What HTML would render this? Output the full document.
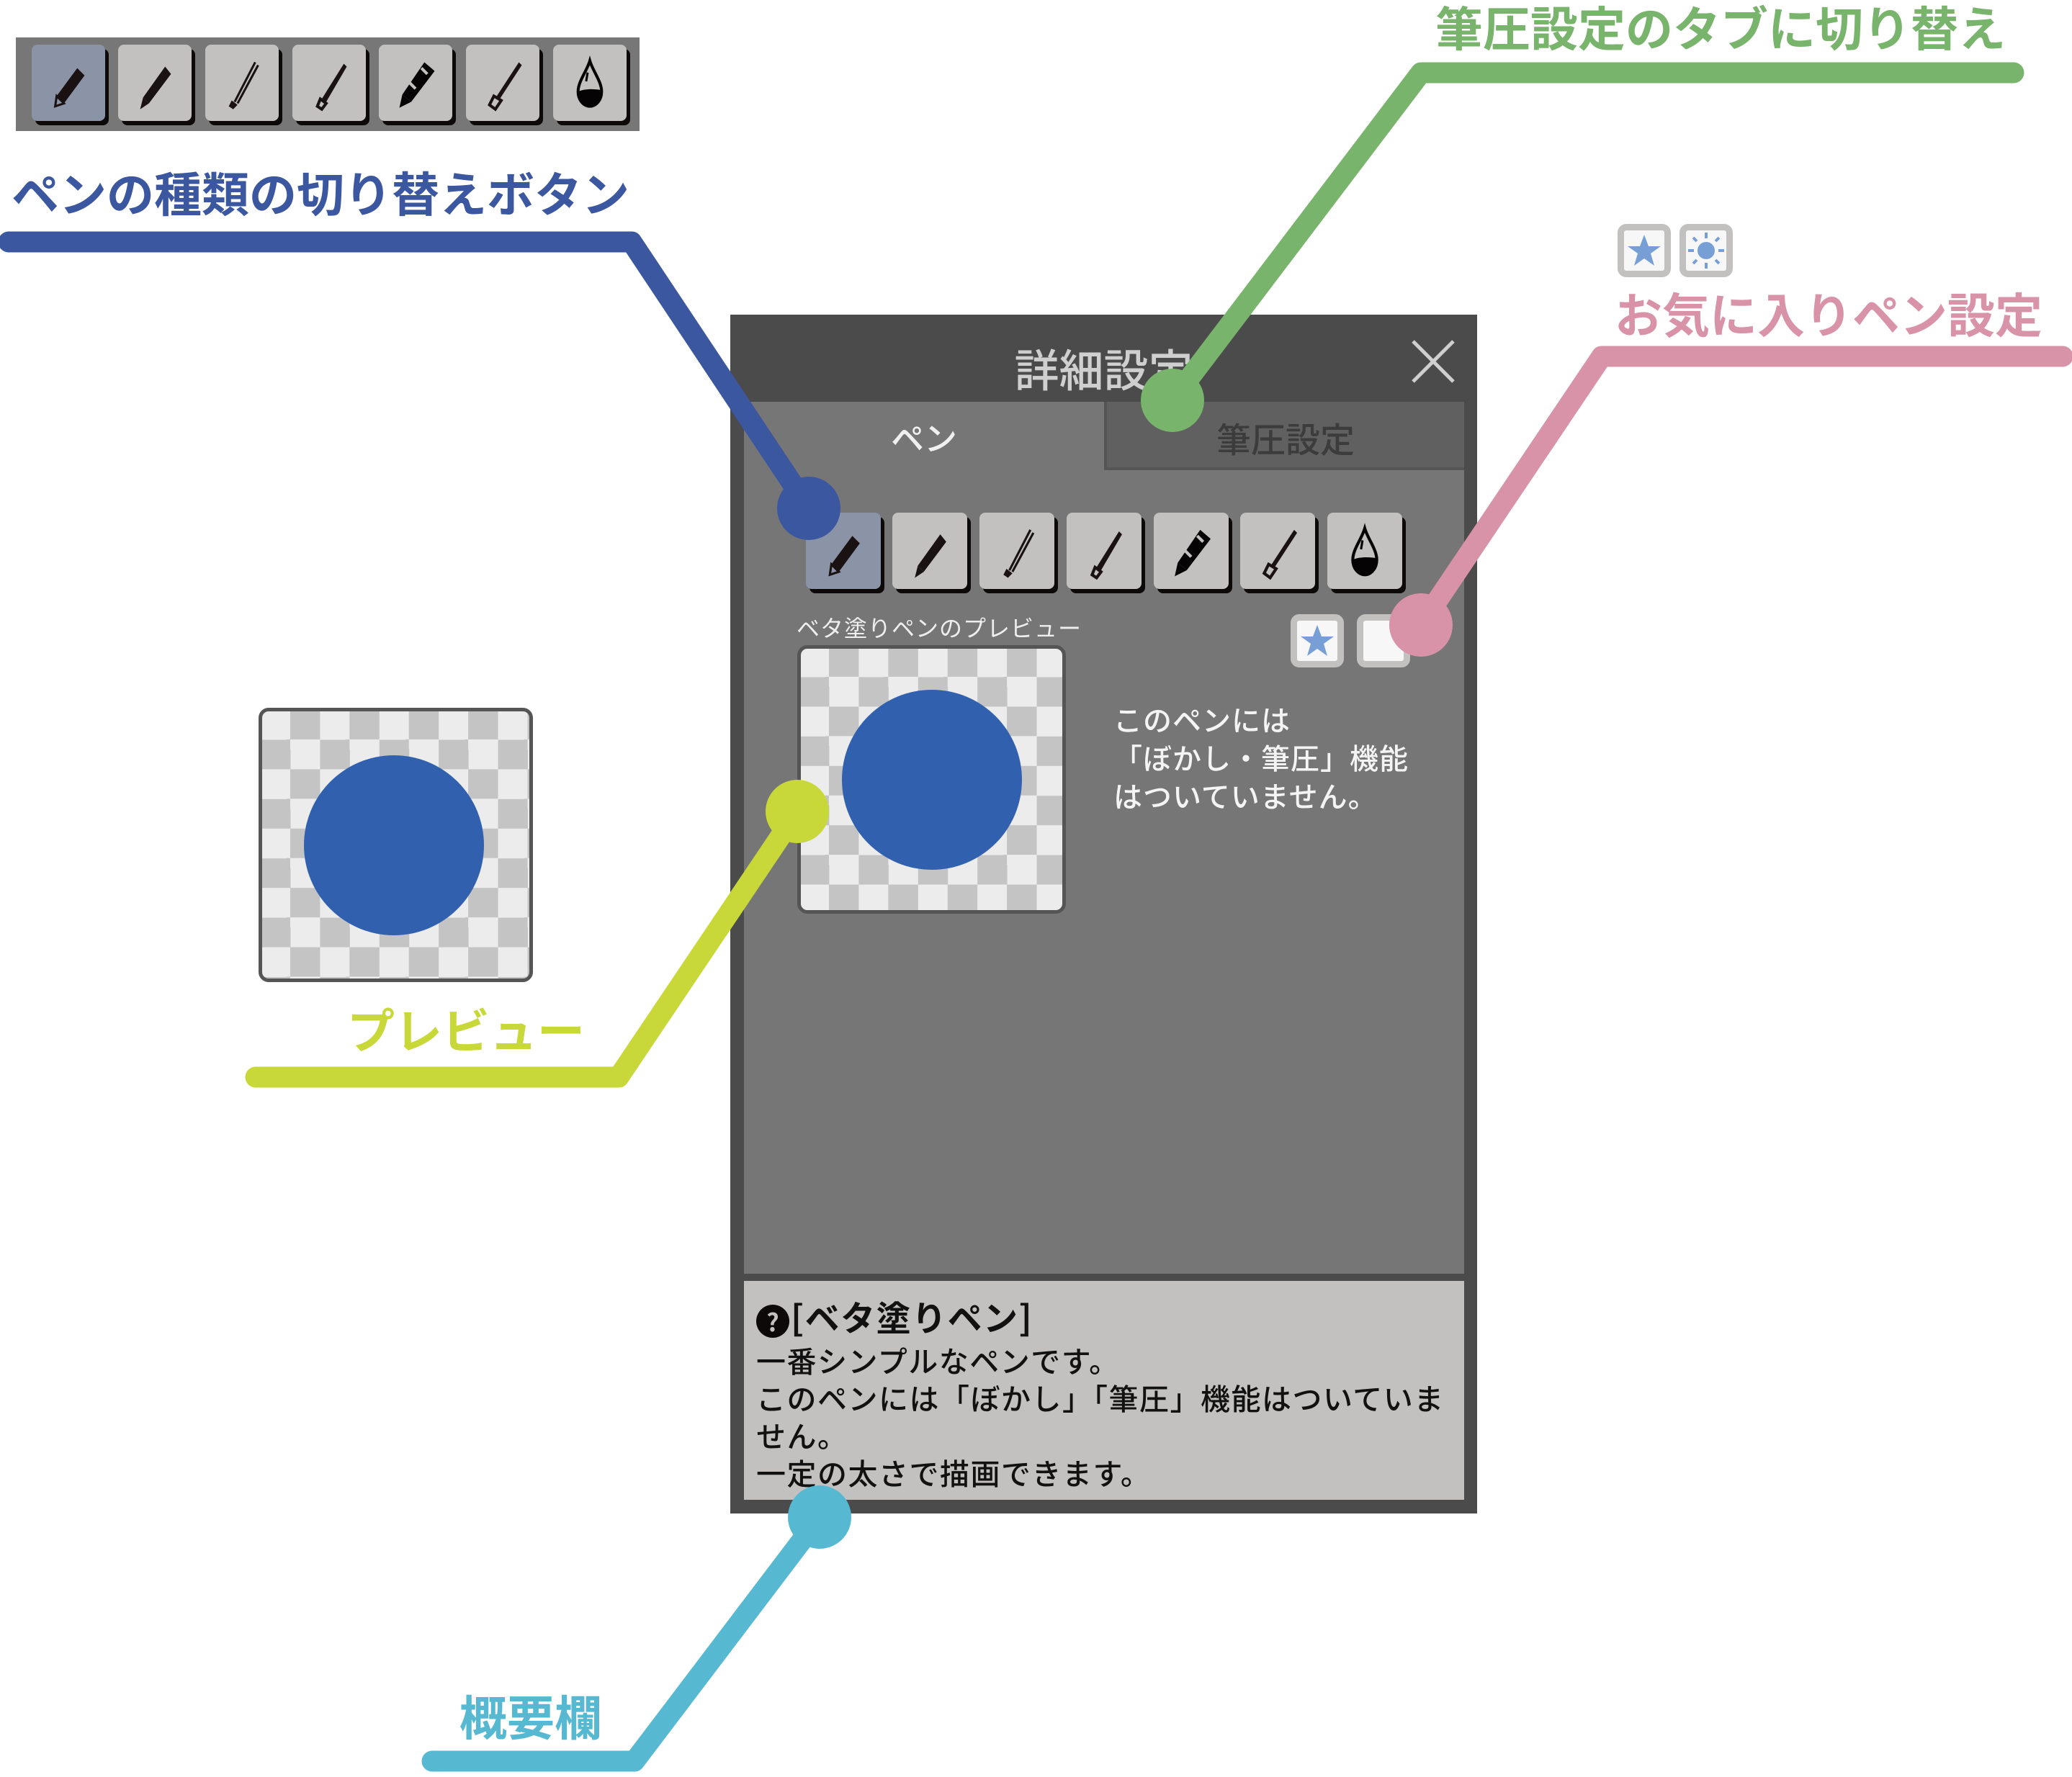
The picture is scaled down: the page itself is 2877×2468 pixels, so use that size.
<!DOCTYPE html>
<html><head><meta charset="utf-8">
<style>
*{margin:0;padding:0;box-sizing:border-box}
body{width:2877px;height:2468px;background:#fff;position:relative;overflow:hidden;font-family:"Liberation Sans","Noto Sans CJK JP",sans-serif}
.a{position:absolute}
.btn{position:absolute;width:104px;height:106px;background:#c2c1bf;border-radius:8px;box-shadow:5px 6px 0 #0d0908}
.btn.sel{background:#8b93a6}
.btn svg{width:100%;height:100%}
.lbl{position:absolute;font-weight:bold;white-space:nowrap;font-family:"Noto Sans CJK JP",sans-serif}
.chk{background-color:#ececec;background-image:repeating-conic-gradient(#c4c4c4 0 25%,#ececec 0 50%);background-size:82.4px 82.4px;background-position:-2px -2px;border:5px solid #555;border-radius:14px;overflow:hidden}
.circ{position:absolute;border-radius:50%;background:#3161ae}
.fav{position:absolute;width:74px;height:74px;background:#f7f7f7;border:9px solid #c2c1bf;border-radius:12px}
</style></head><body>
<svg width="0" height="0" style="position:absolute">
<defs>
<symbol id="i1" viewBox="0 0 100 100"><path d="M62 30 L72 40 L44 78 L34 68 Z" fill="#1a1212"/><path d="M34 68 L44 78 L32 82 Z" fill="none" stroke="#1a1212" stroke-width="3"/></symbol>
<symbol id="i2" viewBox="0 0 100 100"><path d="M64 28 L72 38 L42 78 L34 70 Z" fill="#1a1212"/><path d="M34 70 L42 78 L30 86 Z" fill="#1a1212"/></symbol>
<symbol id="i3" viewBox="0 0 100 100"><path d="M68 22 L40 76" stroke="#1a1212" stroke-width="3" fill="none"/><path d="M72 26 L44 78" stroke="#1a1212" stroke-width="3" fill="none"/><path d="M36 74 L44 80 L38 86 L32 82Z" fill="#1a1212"/></symbol>
<symbol id="i4" viewBox="0 0 100 100"><path d="M70 24 L74 28 L46 76 L40 72 Z" fill="#1a1212"/><path d="M38 72 L46 78 L40 86 L34 82Z" fill="none" stroke="#1a1212" stroke-width="4"/></symbol>
<symbol id="i5" viewBox="0 0 100 100"><path d="M62 22 L76 34 L44 76 L32 66 Z" fill="#050303"/><path d="M66 38 L58 30" stroke="#c2c1bf" stroke-width="4"/><path d="M50 58 L42 50" stroke="#c2c1bf" stroke-width="4"/><path d="M32 66 L44 76 L28 84 Z" fill="#050303"/></symbol>
<symbol id="i6" viewBox="0 0 100 100"><path d="M72 22 L76 26 L46 72 L42 68 Z" fill="#1a1212"/><path d="M38 68 L48 74 L40 86 L32 80Z" fill="none" stroke="#1a1212" stroke-width="4"/></symbol>
<symbol id="i7" viewBox="0 0 100 100"><path d="M50 20 C46 34 34 48 34 62 C34 74 42 82 50 82 C58 82 66 74 66 62 C66 48 54 34 50 20Z" fill="none" stroke="#050303" stroke-width="4"/><path d="M34 62 C42 58 56 58 66 60 C66 74 58 82 50 82 C42 82 34 74 34 62Z" fill="#050303"/><path d="M47 36 L45 48" stroke="#050303" stroke-width="3"/></symbol>
</defs></svg>

<div class="a" style="left:22px;top:52px;width:866px;height:130px;background:#777"></div>
<div class="btn sel" style="left:44px;top:62px;width:102px"><svg><use href="#i1"/></svg></div>
<div class="btn" style="left:164px;top:62px;width:102px"><svg><use href="#i2"/></svg></div>
<div class="btn" style="left:285px;top:62px;width:102px"><svg><use href="#i3"/></svg></div>
<div class="btn" style="left:406px;top:62px;width:102px"><svg><use href="#i4"/></svg></div>
<div class="btn" style="left:526px;top:62px;width:102px"><svg><use href="#i5"/></svg></div>
<div class="btn" style="left:647px;top:62px;width:102px"><svg><use href="#i6"/></svg></div>
<div class="btn" style="left:768px;top:62px;width:102px"><svg><use href="#i7"/></svg></div>

<div class="a" style="left:1014px;top:437px;width:1037px;height:1665px;background:#4b4b4b"></div>
<div class="a" style="left:1015px;top:440px;width:1035px;height:118px;color:#cfcfcf;font-size:62px;text-align:center;line-height:140px;font-family:'Noto Sans CJK JP',sans-serif;font-weight:500">詳細設定</div>
<svg class="a" style="left:1958px;top:470px" width="64" height="64"><path d="M4 4 L60 60 M60 4 L4 60" stroke="#cfcfcf" stroke-width="5"/></svg>
<div class="a" style="left:1033px;top:558px;width:1000px;height:1211px;background:#767676"></div>
<div class="a" style="left:1533px;top:558px;width:500px;height:95px;background:#606060;border-left:4px solid #555;border-bottom:4px solid #555"></div>
<div class="a" style="left:1033px;top:558px;width:500px;height:95px;color:#f0f0f0;font-size:46px;text-align:center;line-height:98px;font-family:'Noto Sans CJK JP',sans-serif;font-weight:500">ペン</div>
<div class="a" style="left:1537px;top:558px;width:496px;height:91px;color:#3c3c3c;font-size:48px;text-align:center;line-height:98px;font-family:'Noto Sans CJK JP',sans-serif;font-weight:500">筆圧設定</div>

<div class="btn sel" style="left:1119px;top:712px"><svg><use href="#i1"/></svg></div>
<div class="btn" style="left:1239px;top:712px"><svg><use href="#i2"/></svg></div>
<div class="btn" style="left:1360px;top:712px"><svg><use href="#i3"/></svg></div>
<div class="btn" style="left:1481px;top:712px"><svg><use href="#i4"/></svg></div>
<div class="btn" style="left:1602px;top:712px"><svg><use href="#i5"/></svg></div>
<div class="btn" style="left:1722px;top:712px"><svg><use href="#i6"/></svg></div>
<div class="btn" style="left:1843px;top:712px"><svg><use href="#i7"/></svg></div>

<div class="a" style="left:1106px;top:848px;color:#eee;font-size:32px;font-family:'Noto Sans CJK JP',sans-serif;letter-spacing:1px">ベタ塗りペンのプレビュー</div>
<div class="a chk" style="left:1107px;top:896px;width:373px;height:373px"></div>
<div class="circ" style="left:1169px;top:958px;width:250px;height:250px"></div>

<div class="fav" style="left:1792px;top:853px"><svg width="56" height="56" viewBox="0 0 56 56"><path d="M28 6 L34 22 L51 22 L37 32 L42 49 L28 39 L14 49 L19 32 L5 22 L22 22Z" fill="#779fd6"/></svg></div>
<div class="fav" style="left:1884px;top:853px"></div>

<div class="a" style="left:1546px;top:972px;color:#f4f4f4;font-size:40px;line-height:53px;font-family:'Noto Sans CJK JP',sans-serif;letter-spacing:1px;font-weight:500">このペンには<br>「ぼかし・筆圧」機能<br>はついていません。</div>

<div class="a" style="left:1033px;top:1779px;width:1000px;height:304px;background:#c2c1bf"></div>
<div class="a" style="left:1050px;top:1792px;color:#111;font-size:41px;line-height:52px;font-family:'Noto Sans CJK JP',sans-serif;white-space:nowrap;font-weight:500;letter-spacing:1.5px"><span style="font-size:48px;line-height:70px;display:block;font-weight:bold"><span style="display:inline-block;width:46px;height:46px;border-radius:50%;background:#0d0908;color:#c2c1bf;font-size:34px;text-align:center;line-height:46px;vertical-align:middle;font-weight:bold;margin-right:2px;letter-spacing:0">?</span>[ベタ塗りペン]</span>一番シンプルなペンです。<br>このペンには「ぼかし」「筆圧」機能はついていま<br>せん。<br>一定の太さで描画できます。</div>

<div class="a chk" style="left:359px;top:983px;width:381px;height:381px"></div>
<div class="circ" style="left:422px;top:1049px;width:250px;height:250px"></div>

<div class="fav" style="left:2246px;top:311px"><svg width="56" height="56" viewBox="0 0 56 56"><path d="M28 6 L34 22 L51 22 L37 32 L42 49 L28 39 L14 49 L19 32 L5 22 L22 22Z" fill="#779fd6"/></svg></div>
<div class="fav" style="left:2332px;top:311px"><svg width="56" height="56" viewBox="0 0 56 56"><circle cx="28" cy="28" r="12" fill="#779fd6"/><g stroke="#779fd6" stroke-width="4"><path d="M28 3V11M28 45V53M3 28H11M45 28H53M10 10L15 15M41 41L46 46M46 10L41 15M15 41L10 46"/></g></svg></div>

<svg class="a" style="left:0;top:0" width="2877" height="2468">
<g fill="none" stroke-width="29" stroke-linecap="round" stroke-linejoin="round">
<polyline points="12,336 877,336 1123,706" stroke="#3a57a0"/>
<polyline points="2796,101 1973,101 1628,556" stroke="#78b46b"/>
<polyline points="2864,495 2224,495 1973,868" stroke="#d993a9"/>
<polyline points="355,1496 859,1496 1107,1127" stroke="#c8d838"/>
<polyline points="600,2446 881,2446 1138,2107" stroke="#57b8d2"/>
</g>
<circle cx="1123" cy="706" r="44" fill="#3a57a0"/>
<circle cx="1628" cy="556" r="44" fill="#78b46b"/>
<circle cx="1973" cy="868" r="44" fill="#d993a9"/>
<circle cx="1107" cy="1127" r="44" fill="#c8d838"/>
<circle cx="1138" cy="2107" r="44" fill="#57b8d2"/>
</svg>

<div class="lbl" style="left:16px;top:226px;font-size:66px;color:#3a57a0;line-height:80px">ペンの種類の切り替えボタン</div>
<div class="lbl" style="left:1993px;top:-4px;font-size:66px;color:#78b46b;line-height:80px">筆圧設定のタブに切り替え</div>
<div class="lbl" style="left:2242px;top:394px;font-size:66px;color:#d993a9;line-height:80px">お気に入りペン設定</div>
<div class="lbl" style="left:482px;top:1388px;font-size:66px;color:#c8d838;line-height:80px">プレビュー</div>
<div class="lbl" style="left:638px;top:2342px;font-size:66px;color:#57b8d2;line-height:80px">概要欄</div>
</body></html>
